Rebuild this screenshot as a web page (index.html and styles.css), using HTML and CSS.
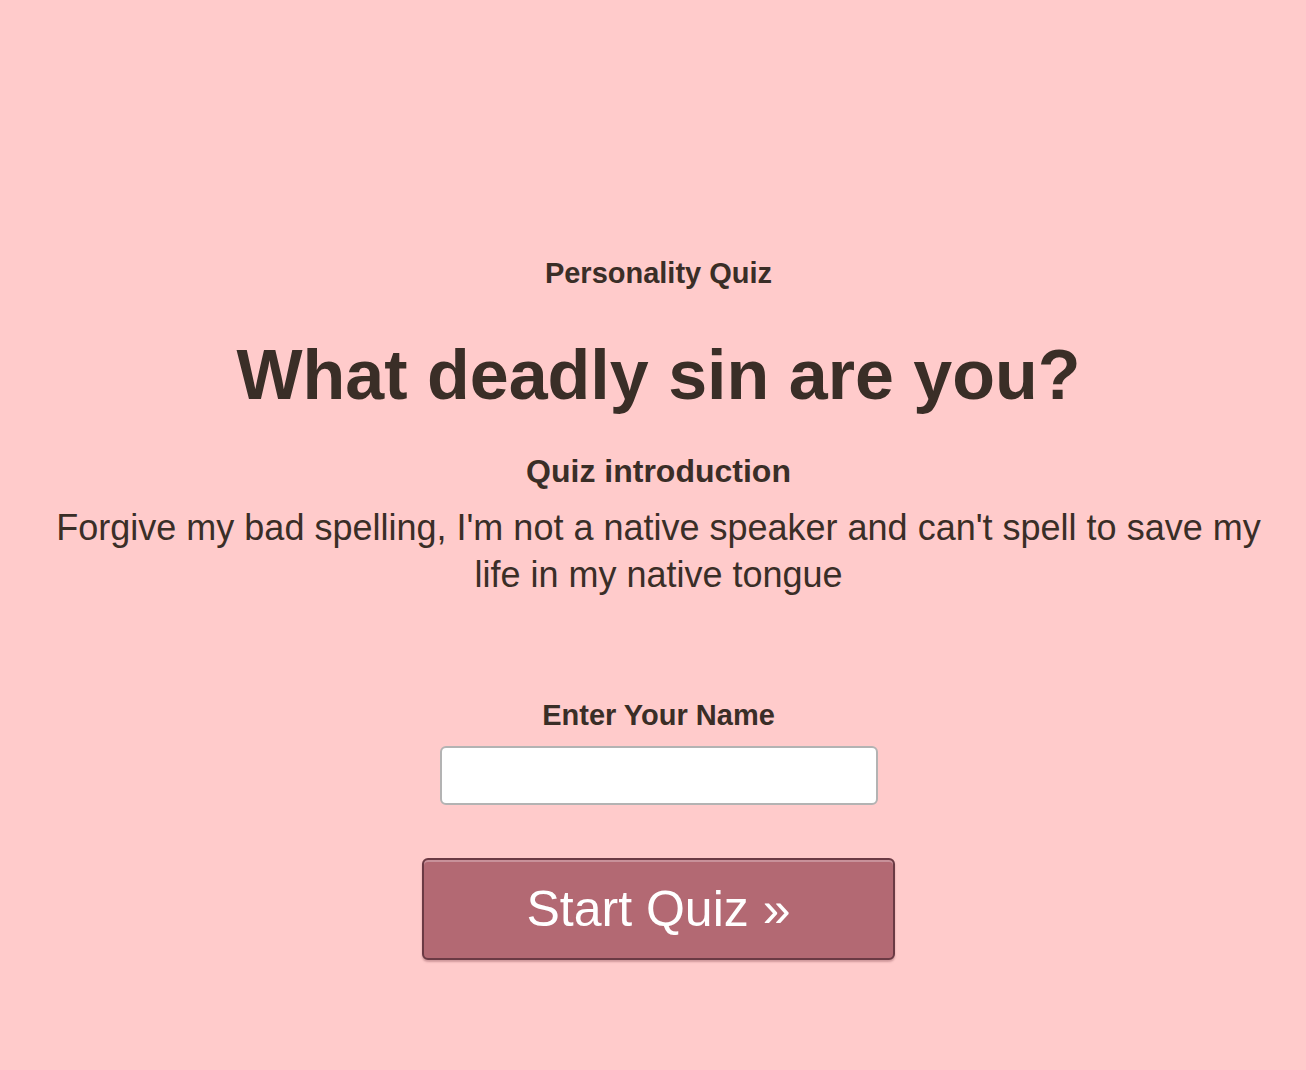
FILE: index.html
```html
<!DOCTYPE html>
<html>
<head>
<meta charset="utf-8">
<link rel="stylesheet" href="styles.css">
</head>
<body>
<main class="quiz">
  <div class="kicker">Personality Quiz</div>
  <h1 class="title">What deadly sin are you?</h1>
  <h2 class="intro-head">Quiz introduction</h2>
  <p class="intro">Forgive my bad spelling, I'm not a native speaker and can't spell to save my life in my native tongue</p>
  <form class="start">
    <label class="name-label" for="name">Enter Your Name</label>
    <input class="name-input" id="name" type="text">
    <button class="start-btn" type="button">Start Quiz »</button>
  </form>
</main>
</body>
</html>
```
FILE: styles.css
```css
html, body {
  margin: 0;
  padding: 0;
}
body {
  background: #ffcbcb;
  color: #3a2e27;
  font-family: "Liberation Sans", Arial, sans-serif;
  min-height: 1070px;
}
.quiz {
  display: flex;
  flex-direction: column;
  align-items: center;
  text-align: center;
  padding: 255px 0 0 11px;
}
.kicker {
  font-size: 29px;
  font-weight: bold;
  line-height: 36px;
}
.title {
  margin: 44px 0 0;
  font-size: 70px;
  font-weight: bold;
  line-height: 80px;
}
.intro-head {
  margin: 36px 0 0;
  font-size: 32px;
  font-weight: bold;
  line-height: 40px;
}
.intro {
  margin: 13px 0 0;
  font-size: 36px;
  line-height: 47px;
  padding: 0 40px;
}
.start {
  display: flex;
  flex-direction: column;
  align-items: center;
  margin-top: 98px;
}
.name-label {
  font-size: 29px;
  font-weight: bold;
  line-height: 38px;
}
.name-input {
  box-sizing: border-box;
  width: 438px;
  height: 59px;
  margin-top: 12px;
  border: 2px solid #b3b3b3;
  border-radius: 6px;
  background: #fff;
}
.start-btn {
  box-sizing: border-box;
  width: 473px;
  height: 102px;
  margin-top: 53px;
  background: #b36973;
  border: 2px solid #6b3a44;
  border-radius: 6px;
  box-shadow: inset 0 2px 0 #c8919a, 0 2px 2px rgba(120, 60, 70, 0.35);
  color: #fff;
  font-family: "Liberation Sans", Arial, sans-serif;
  font-size: 50px;
  line-height: 1;
  padding: 0;
}
```
